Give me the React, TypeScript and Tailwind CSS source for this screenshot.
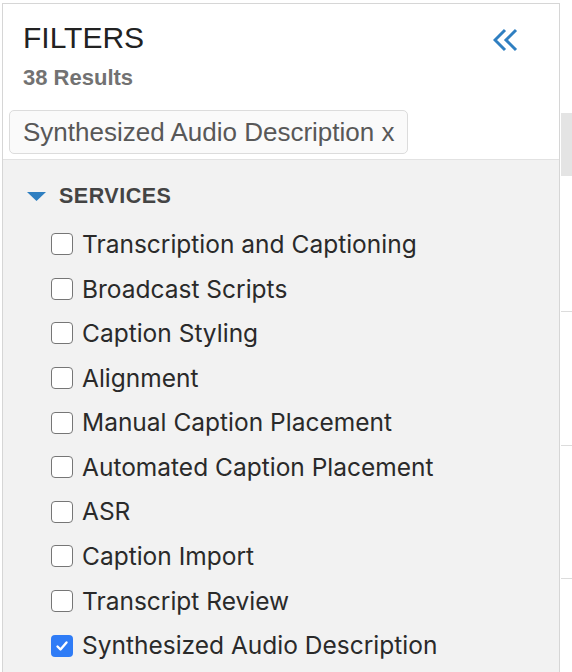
import { useState } from "react";

const services = [
  "Transcription and Captioning",
  "Broadcast Scripts",
  "Caption Styling",
  "Alignment",
  "Manual Caption Placement",
  "Automated Caption Placement",
  "ASR",
  "Caption Import",
  "Transcript Review",
  "Synthesized Audio Description",
];

const Check = ({ checked }: { checked: boolean }) =>
  checked ? (
    <span className="flex h-[22px] w-[22px] shrink-0 items-center justify-center rounded-[4px] bg-[#2f7cf6]">
      <svg width="14" height="14" viewBox="0 0 14 14" fill="none">
        <path d="M2.5 7.5 L5.5 10.5 L11.5 3.5" stroke="white" strokeWidth="2.4" strokeLinecap="round" strokeLinejoin="round" />
      </svg>
    </span>
  ) : (
    <span className="h-[22px] w-[22px] shrink-0 rounded-[4px] border-[1.5px] border-[#767676] bg-white" />
  );

export default function App() {
  const [selected, setSelected] = useState<string[]>(["Synthesized Audio Description"]);

  const toggle = (s: string) =>
    setSelected((prev) => (prev.includes(s) ? prev.filter((x) => x !== s) : [...prev, s]));

  return (
    <div className="flex h-[672px] w-[572px] overflow-hidden bg-white pl-[2px] pt-[3px]">
      <div className="flex w-[558px] flex-col border-l border-t border-r border-[#d6d6d6]">
        {/* header */}
        <div className="flex flex-col bg-white pl-[20px] pr-[40px] pt-[17px]" style={{ fontFamily: '"Liberation Sans", Arial, sans-serif' }}>
          <div className="flex items-start justify-between">
            <h1 className="text-[30px] leading-[34px] text-[#222]">FILTERS</h1>
            <svg className="mt-[7px]" width="26" height="24" viewBox="0 0 26 24" fill="none">
              <path d="M12 2 L2 12 L12 22" stroke="#2f7fc1" strokeWidth="3" />
              <path d="M23 2 L13 12 L23 22" stroke="#2f7fc1" strokeWidth="3" />
            </svg>
          </div>
          <p className="mt-[11px] text-[22px] font-bold leading-[24px] text-[#727272]">38 Results</p>
        </div>
        <div className="bg-white px-[6px] pb-[5px] pt-[20px]" style={{ fontFamily: '"Liberation Sans", Arial, sans-serif' }}>
          <span className="inline-flex h-[44px] items-center rounded-[5px] border border-[#dcdcdc] bg-[#fafafa] px-[13px] text-[26px] text-[#585858]">
            Synthesized Audio Description x
          </span>
        </div>
        {/* services */}
        <div className="flex-1 border-t border-[#e2e2e2] bg-[#f2f2f2] pl-[24px] pt-[24px]">
          <div className="flex items-center gap-[13px]" style={{ fontFamily: '"Liberation Sans", Arial, sans-serif' }}>
            <svg width="19" height="9" viewBox="0 0 19 9">
              <path d="M0 0 H19 L9.5 9 Z" fill="#2f7fc1" />
            </svg>
            <span className="text-[21.5px] font-bold leading-[24px] tracking-[0.5px] text-[#444]">SERVICES</span>
          </div>
          <ul className="mt-[14px] pl-[24px]" style={{ fontFamily: 'Inter, "Noto Sans", sans-serif' }}>
            {services.map((s) => (
              <li
                key={s}
                className="flex h-[44.6px] cursor-pointer items-center gap-[9px] whitespace-nowrap text-[24.5px] text-[#2a2a2a]"
                onClick={() => toggle(s)}
              >
                <Check checked={selected.includes(s)} />
                <span>{s}</span>
              </li>
            ))}
          </ul>
        </div>
      </div>
      {/* right edge of the next panel */}
      <div className="flex flex-1 flex-col pl-[1px] pt-[110px]">
        <div className="h-[63px] bg-[#e4e4e4]" />
        <div className="h-[135px]" />
        <div className="h-[134px] border-t border-[#dcdcdc]" />
        <div className="h-[133px] border-t border-[#dcdcdc]" />
        <div className="flex-1 border-t border-[#dcdcdc]" />
      </div>
    </div>
  );
}
